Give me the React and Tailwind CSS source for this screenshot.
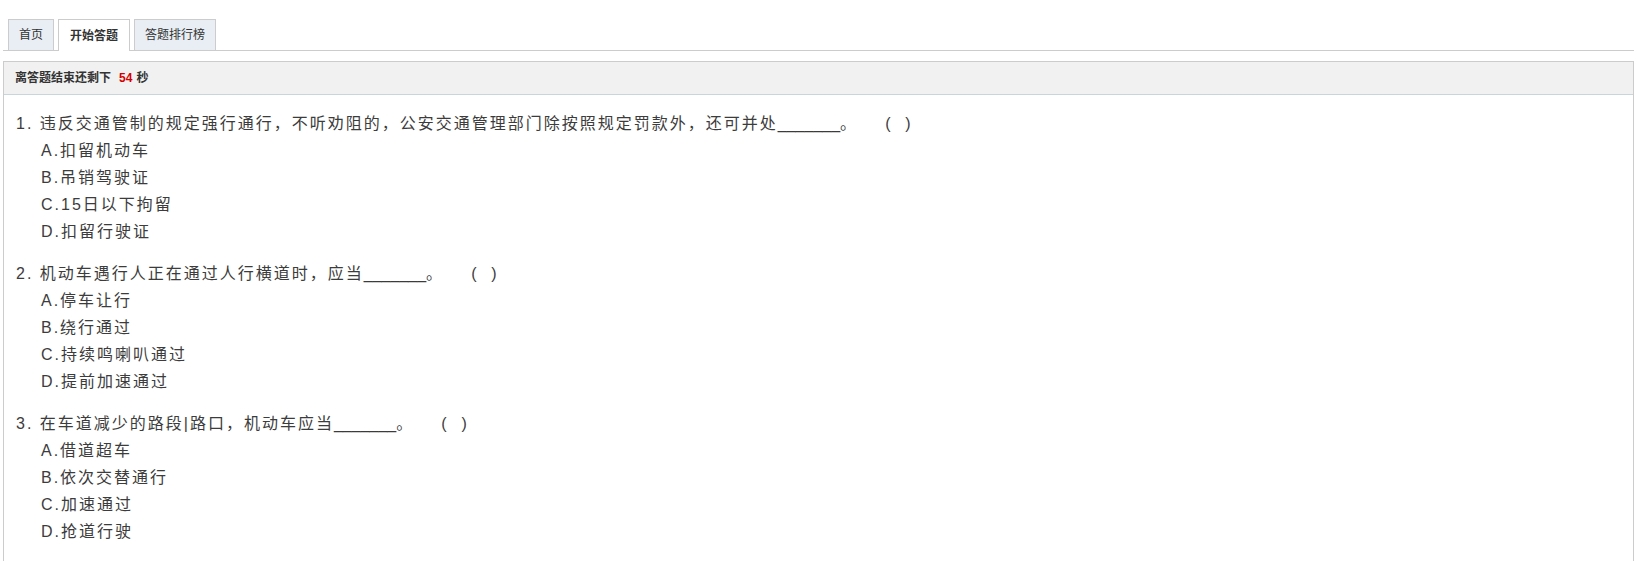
import { useState } from 'react';

// Exam questions shown on the answer page
const QUESTIONS = [
  {
    stem: '违反交通管制的规定强行通行，不听劝阻的，公安交通管理部门除按照规定罚款外，还可并处',
    options: ['A.扣留机动车', 'B.吊销驾驶证', 'C.15日以下拘留', 'D.扣留行驶证'],
  },
  {
    stem: '机动车遇行人正在通过人行横道时，应当',
    options: ['A.停车让行', 'B.绕行通过', 'C.持续鸣喇叭通过', 'D.提前加速通过'],
  },
  {
    stem: '在车道减少的路段|路口，机动车应当',
    options: ['A.借道超车', 'B.依次交替通行', 'C.加速通过', 'D.抢道行驶'],
  },
];

const TABS = ['首页', '开始答题', '答题排行榜'];

function Tabs({ active }) {
  return (
    <div className="flex gap-[4px] pl-[5px] border-b border-[#cccccc]">
      {TABS.map((tab, index) => (
        <div
          key={tab}
          className={`h-[31px] flex items-center border border-b-0 border-[#cccccc] text-[12px] text-[#333] ${
            index === active
              ? 'bg-white font-bold px-[11px] h-[32px] -mb-px'
              : 'bg-[#e8eef4] px-[10px]'
          }`}
        >
          {tab}
        </div>
      ))}
    </div>
  );
}

function Question({ index, stem, options }) {
  return (
    <div className="mb-[15px]">
      <div className="leading-[27px] whitespace-nowrap">
        {index}. {stem}
        <span className="font-['Liberation_Sans'] tracking-normal">_______</span>
        。
        <span className="ml-[27px]">(&nbsp;&nbsp;)</span>
      </div>
      {options.map((opt) => (
        <div key={opt} className="leading-[27px] pl-[25px]">
          {opt}
        </div>
      ))}
    </div>
  );
}

export default function App() {
  const [seconds] = useState(54);

  return (
    <div className="px-[3px] pt-[19px] bg-white font-['Liberation_Sans','Noto_Sans_CJK_SC',sans-serif]">
      <Tabs active={1} />

      <div className="mt-[10px] border border-[#cccccc]">
        {/* countdown header */}
        <div className="h-[33px] bg-[#f1f1f1] border-b border-[#c9d5dd] flex items-center pl-[11px] text-[12px] font-bold text-[#333]">
          离答题结束还剩下
          <span className="text-[#d40000] ml-[8px] mr-[4px]">{seconds}</span>
          秒
        </div>

        {/* question list */}
        <div className="pt-[15px] pl-[12px] pb-[30px] text-[16px] tracking-[2px] text-[#3c3c3c]">
          {QUESTIONS.map((q, i) => (
            <Question key={i} index={i + 1} stem={q.stem} options={q.options} />
          ))}
        </div>
      </div>
    </div>
  );
}
